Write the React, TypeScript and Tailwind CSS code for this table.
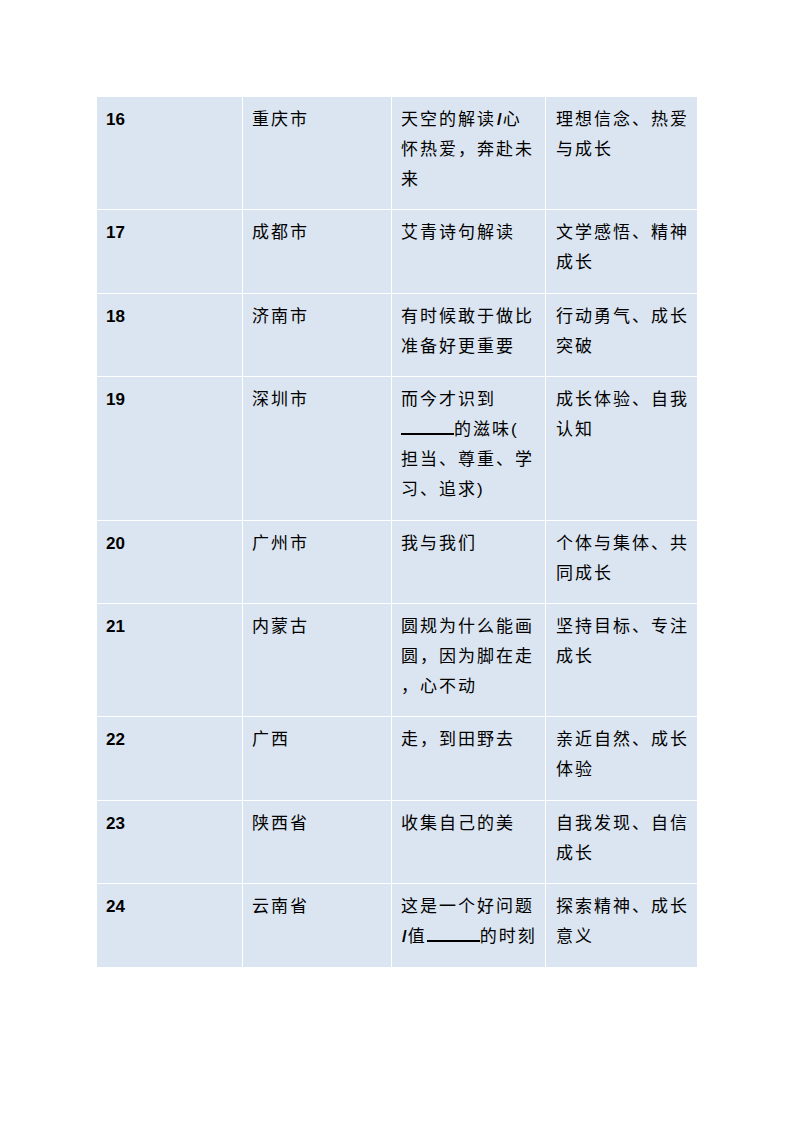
const Blank = () => <span className="inline-block w-[53px] h-[18px] align-baseline border-b-2 border-black" />

const Slash = () => <b className="mx-[1px] font-bold tracking-normal">/</b>

type Row = { no: string; city: string; topic: React.ReactNode; theme: React.ReactNode }

const rows: Row[] = [
  {
    no: "16",
    city: "重庆市",
    topic: (<>天空的解读<Slash />心<br />怀热爱，奔赴未<br />来</>),
    theme: (<>理想信念、热爱<br />与成长</>),
  },
  { no: "17", city: "成都市", topic: "艾青诗句解读", theme: (<>文学感悟、精神<br />成长</>) },
  { no: "18", city: "济南市", topic: (<>有时候敢于做比<br />准备好更重要</>), theme: (<>行动勇气、成长<br />突破</>) },
  {
    no: "19",
    city: "深圳市",
    topic: (<>而今才识到<br /><Blank />的滋味(<br />担当、尊重、学<br />习、追求)</>),
    theme: (<>成长体验、自我<br />认知</>),
  },
  { no: "20", city: "广州市", topic: "我与我们", theme: (<>个体与集体、共<br />同成长</>) },
  {
    no: "21",
    city: "内蒙古",
    topic: (<>圆规为什么能画<br />圆，因为脚在走<br />，心不动</>),
    theme: (<>坚持目标、专注<br />成长</>),
  },
  { no: "22", city: "广西", topic: "走，到田野去", theme: (<>亲近自然、成长<br />体验</>) },
  { no: "23", city: "陕西省", topic: "收集自己的美", theme: (<>自我发现、自信<br />成长</>) },
  {
    no: "24",
    city: "云南省",
    topic: (<>这是一个好问题<br /><Slash />值<Blank />的时刻</>),
    theme: (<>探索精神、成长<br />意义</>),
  },
]

const cell = "bg-[#dbe5f1] pl-[9px] pr-1 pt-[8px] pb-[14.4px] text-[17px] leading-[30px] tracking-[2px] text-black"

export default function App() {
  return (
    <div className="min-h-[1123px] w-[794px] bg-white pt-[97px] pl-[97px] font-['Liberation_Sans','Noto_Sans_CJK_SC',sans-serif]">
      <div className="grid w-[600px] grid-cols-[145px_148px_153px_151px] gap-px bg-white">
        {rows.map((r) => (
          <div key={r.no} className="contents">
            <div className={`${cell} font-bold tracking-normal`}>{r.no}</div>
            <div className={cell}>{r.city}</div>
            <div className={`${cell} whitespace-nowrap`}>{r.topic}</div>
            <div className={`${cell} pl-[10px]`}>{r.theme}</div>
          </div>
        ))}
      </div>
    </div>
  )
}
